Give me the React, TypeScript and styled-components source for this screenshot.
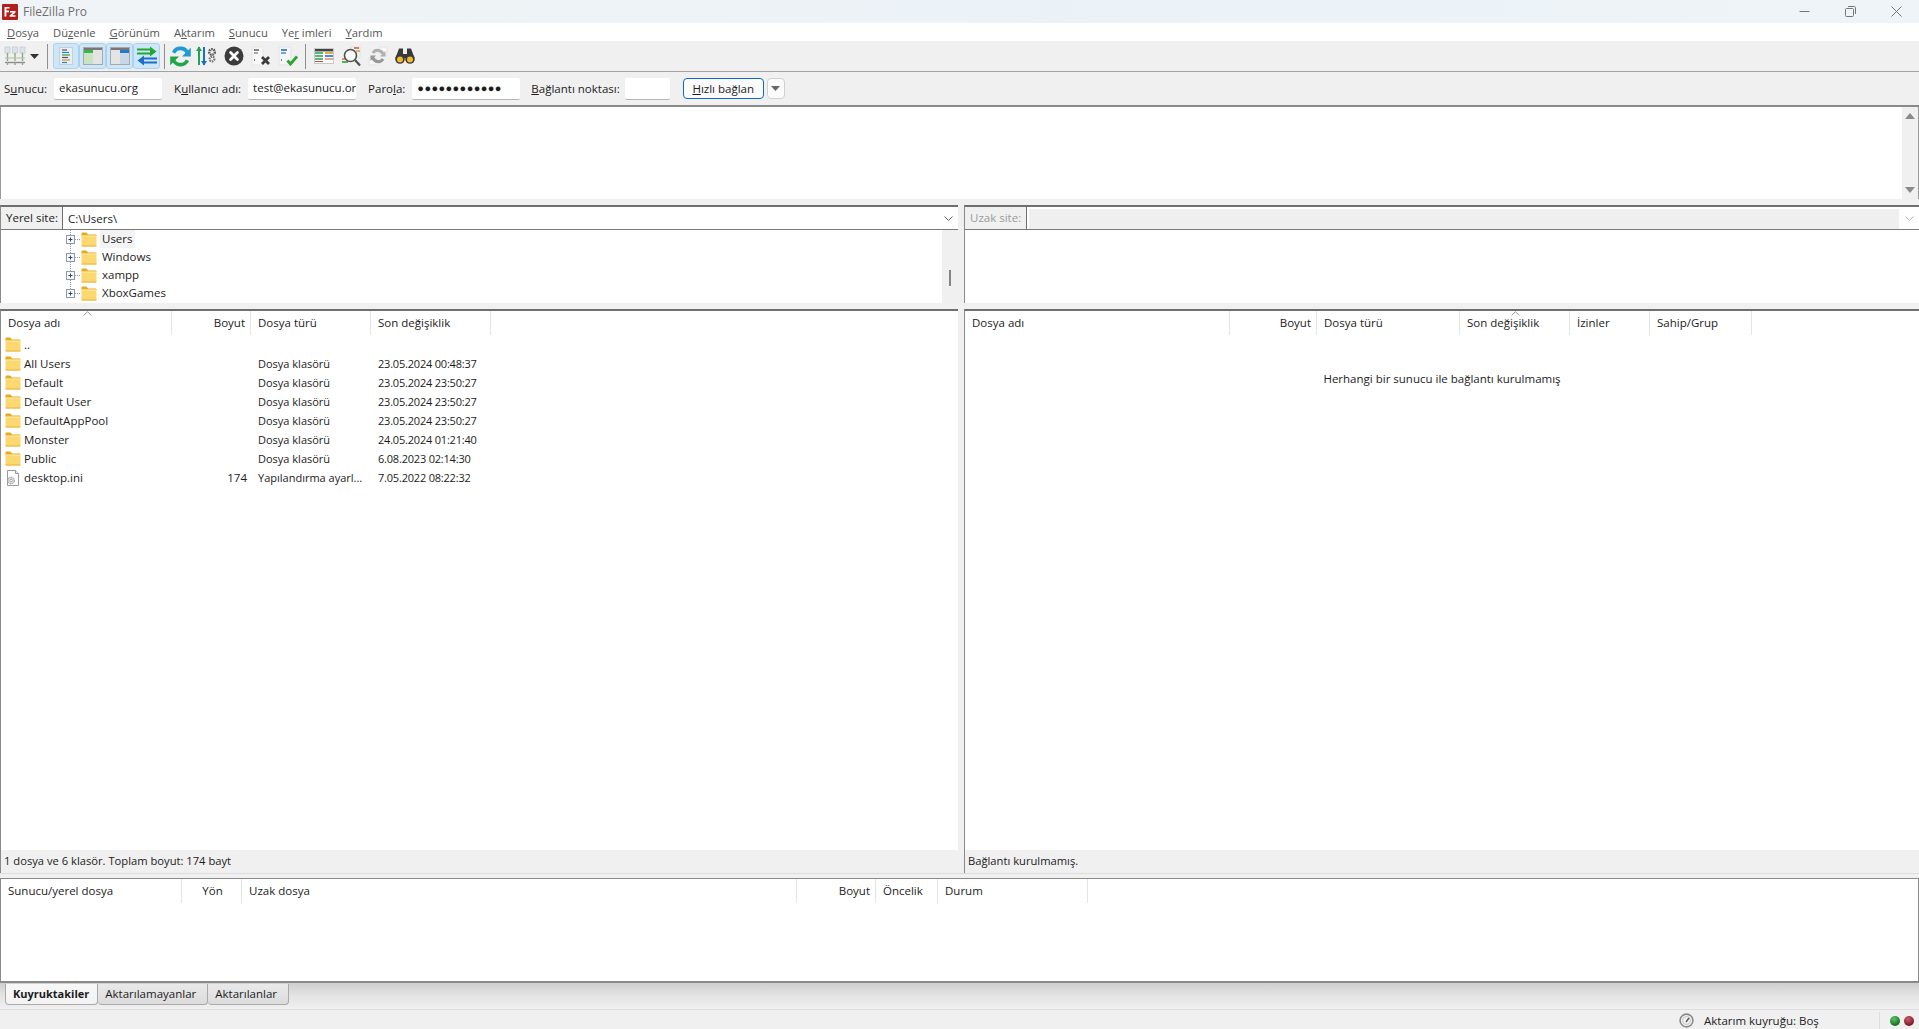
import React from "react";
import styled, { createGlobalStyle } from "styled-components";

const GlobalStyle = createGlobalStyle`
  html, body {
    margin: 0;
    padding: 0;
    height: 100%;
    overflow: hidden;
    background: #f0f0f0;
  }
  body {
    font-family: "Open Sans", "Noto Sans", sans-serif;
    font-size: 11.5px;
    color: #1c1c1c;
  }
  u { text-underline-offset: 1px; }
`;

const Page = styled.div`
  width: 1919px;
  height: 1029px;
  display: flex;
  flex-direction: column;
  overflow: hidden;
`;

const TitleBar = styled.div`
  height: 23px;
  flex: none;
  display: flex;
  align-items: center;
  background: linear-gradient(90deg, #f1f4f6 0%, #ebf2f7 55%, #eef4f8 100%);
  color: #6f6f6f;
  padding-left: 2px;
  font-size: 12px;
`;

const TitleText = styled.span`
  margin-left: 5px;
  flex: 1;
`;

const WindowButton = styled.div`
  width: 46px;
  height: 23px;
  display: flex;
  align-items: center;
  justify-content: center;
`;

const MenuBar = styled.div`
  height: 18px;
  flex: none;
  background: #fff;
  display: flex;
  align-items: center;
  gap: 14px;
  padding-left: 7px;
  color: #555;
  font-size: 11.2px;
`;

const Toolbar = styled.div`
  height: 30px;
  flex: none;
  display: flex;
  align-items: center;
  padding-left: 4px;
  background: #f0f0f0;
  border-bottom: 1px solid #a3a3a3;
`;

const ToolButton = styled.div<{ $active?: boolean; $w?: number }>`
  width: ${(p) => p.$w ?? 22}px;
  height: 26px;
  box-sizing: border-box;
  display: flex;
  align-items: center;
  justify-content: center;
  border-radius: 3px;
  ${(p) => (p.$active ? "background: #cfe6f8; border: 1px solid #a6d3f5;" : "")}
`;

const ToolSeparator = styled.div<{ $gap?: number }>`
  width: 1px;
  height: 25px;
  background: #8f8f8f;
  margin: 0 ${(p) => p.$gap ?? 5}px;
`;

const QuickBar = styled.div`
  height: 33px;
  flex: none;
  display: flex;
  align-items: center;
  padding-left: 4px;
  background: #f0f0f0;
  border-bottom: 2px solid #8a8a8a;
`;

const QuickLabel = styled.span<{ $gap?: number }>`
  margin-right: ${(p) => p.$gap ?? 8}px;
`;

const QuickInput = styled.div<{ $w: number; $mr: number }>`
  width: ${(p) => p.$w}px;
  height: 22px;
  margin-right: ${(p) => p.$mr}px;
  box-sizing: border-box;
  padding: 0 5px;
  background: #fff;
  border-bottom: 1px solid #b5b5b5;
  border-radius: 2px;
  line-height: 20px;
  overflow: hidden;
  white-space: nowrap;
`;

const Dots = styled.span`
  letter-spacing: 0.4px;
  font-size: 11px;
`;

const ConnectButton = styled.div`
  width: 81px;
  height: 21px;
  box-sizing: border-box;
  margin-right: 3px;
  border: 1px solid #0f6cbd;
  border-radius: 4px;
  background: #fbfbfb;
  text-align: center;
  line-height: 20px;
`;

const ArrowButton = styled.div`
  width: 18px;
  height: 21px;
  box-sizing: border-box;
  border: 1px solid #d0d0d0;
  border-radius: 4px;
  background: #fbfbfb;
  display: flex;
  align-items: center;
  justify-content: center;
`;

const LogArea = styled.div`
  height: 92px;
  flex: none;
  background: #fff;
  display: flex;
  justify-content: flex-end;
  border-left: 1px solid #9a9a9a;
  border-right: 1px solid #9a9a9a;
`;

const ScrollRail = styled.div<{ $w?: number }>`
  width: ${(p) => p.$w ?? 16}px;
  background: #f0f0f0;
  display: flex;
  flex-direction: column;
  justify-content: space-between;
  align-items: center;
  padding: 6px 0;
  box-sizing: border-box;
`;

const Panes = styled.div`
  flex: none;
  height: 668px;
  margin-top: 6px;
  display: grid;
  grid-template-columns: 958px 955px;
  column-gap: 6px;
  background: #f0f0f0;
  border-bottom: 1px solid #dcdcdc;
`;

const Pane = styled.div`
  display: flex;
  flex-direction: column;
  min-width: 0;
`;

const SiteBar = styled.div`
  height: 25px;
  flex: none;
  display: flex;
  box-sizing: border-box;
  border-top: 2px solid #6e6e6e;
  border-bottom: 1px solid #7a7a7a;
  border-left: 1px solid #8a8a8a;
  background: #fff;
`;

const SiteLabel = styled.div<{ $off?: boolean }>`
  width: 62px;
  flex: none;
  box-sizing: border-box;
  padding-left: 5px;
  line-height: 21px;
  background: #f0f0f0;
  border-right: 1px solid #6e6e6e;
  color: ${(p) => (p.$off ? "#9b9b9b" : "#1c1c1c")};
`;

const SiteField = styled.div<{ $off?: boolean }>`
  flex: 1;
  display: flex;
  align-items: center;
  padding: 0 5px;
  margin: ${(p) => (p.$off ? "2px 0 0 2px" : "0")};
  background: ${(p) => (p.$off ? "#efefef" : "#fff")};
`;

const Chevron = styled.div`
  width: 20px;
  flex: none;
  display: flex;
  align-items: center;
  justify-content: center;
`;

const TreeBox = styled.div`
  height: 73px;
  flex: none;
  display: flex;
  background: #fff;
  border-left: 1px solid #8a8a8a;
`;

const TreeList = styled.div`
  flex: 1;
  padding-left: 65px;
`;

const TreeRow = styled.div`
  height: 18px;
  display: flex;
  align-items: center;
`;

const TreeLabel = styled.span<{ $selected?: boolean }>`
  margin-left: 3px;
  padding: 0 2px;
  line-height: 18px;
  background: ${(p) => (p.$selected ? "#f3f3f3" : "transparent")};
`;

const TreeScroll = styled.div`
  width: 16px;
  flex: none;
  background: #f0f0f0;
  display: flex;
  justify-content: center;
  padding-top: 40px;
  box-sizing: border-box;
`;

const TreeThumb = styled.div`
  width: 2px;
  height: 16px;
  background: #858585;
`;

const ListBox = styled.div`
  flex: 1;
  margin-top: 6px;
  min-height: 0;
  display: flex;
  flex-direction: column;
  background: #fff;
  border-top: 2px solid #6e6e6e;
  border-left: 1px solid #8a8a8a;
`;

const HeaderRow = styled.div`
  height: 24px;
  flex: none;
  display: flex;
  position: relative;
`;

const HeaderCell = styled.div<{ $w: number; $right?: boolean; $center?: boolean }>`
  width: ${(p) => p.$w}px;
  flex: none;
  box-sizing: border-box;
  padding: 0 5px 0 7px;
  line-height: 24px;
  border-right: 1px solid #e5e5e5;
  text-align: ${(p) => (p.$right ? "right" : p.$center ? "center" : "left")};
`;

const SortCaret = styled.svg<{ $x: number }>`
  position: absolute;
  top: 0;
  left: ${(p) => p.$x}px;
`;

const FileRow = styled.div`
  height: 19px;
  display: flex;
  align-items: center;
`;

const NameCell = styled.div`
  width: 172px;
  flex: none;
  display: flex;
  align-items: center;
  padding-left: 4px;
  box-sizing: border-box;
  gap: 3px;
`;

const SizeCell = styled.div`
  width: 79px;
  flex: none;
  box-sizing: border-box;
  padding-right: 5px;
  text-align: right;
`;

const TypeCell = styled.div`
  width: 120px;
  flex: none;
  padding-left: 6px;
  box-sizing: border-box;
  white-space: nowrap;
  font-size: 11px;
`;

const DateCell = styled.div`
  padding-left: 6px;
  font-size: 11px;
  letter-spacing: -0.2px;
`;

const EmptyMessage = styled.div`
  margin-top: 36px;
  text-align: center;
`;

const ListBody = styled.div`
  flex: 1;
`;

const PaneStatus = styled.div`
  height: 23px;
  flex: none;
  line-height: 22px;
  padding-left: 3px;
  font-size: 11.2px;
  background: #f0f0f0;
`;

const QueueBox = styled.div`
  height: 105px;
  flex: none;
  margin-top: 4px;
  box-sizing: border-box;
  background: #fff;
  border: 1px solid #8a8a8a;
  border-bottom: 2px solid #8a8a8a;
`;

const TabStrip = styled.div`
  height: 26px;
  flex: none;
  display: flex;
  padding-left: 5px;
  align-items: flex-start;
  background: linear-gradient(180deg, #cfcfcf 0%, #e4e4e4 50%, #f0f0f0 100%);
  border-bottom: 1px solid #dedede;
`;

const Tab = styled.div<{ $active?: boolean }>`
  height: 21px;
  box-sizing: border-box;
  padding: 0 ${(p) => (p.$active ? 8 : 11)}px 0 7px;
  line-height: 20px;
  margin-top: 1px;
  background: ${(p) =>
    p.$active
      ? "linear-gradient(180deg, #f7f7f7, #f3f3f3)"
      : "linear-gradient(180deg, #e9e9e9, #dcdcdc)"};
  border: 1px solid #a9a9a9;
  border-top: none;
  border-left-width: ${(p) => (p.$active ? 1 : 0)}px;
  border-radius: 0 0 4px 4px;
  font-weight: ${(p) => (p.$active ? 700 : 400)};
  font-size: ${(p) => (p.$active ? 11 : 11.5)}px;
`;

const StatusBar = styled.div`
  flex: 1;
  display: flex;
  align-items: center;
  justify-content: flex-end;
  background: #f0f0f0;
  padding-top: 2px;
`;

const QueueStatus = styled.div`
  display: flex;
  align-items: center;
  gap: 10px;
  width: 200px;
  height: 100%;
  border-right: 1px solid #dedede;
`;

const Leds = styled.div`
  width: 39px;
  display: flex;
  align-items: center;
  gap: 4px;
  padding-left: 10px;
  box-sizing: border-box;
`;

const Led = styled.div<{ $color: string; $dark: string }>`
  width: 10px;
  height: 10px;
  border-radius: 50%;
  background: radial-gradient(circle at 40% 30%, ${(p) => p.$color}, ${(p) => p.$dark} 75%);
`;

const Folder = () => (
  <svg width="16" height="15" viewBox="0 0 16 15">
    <path d="M0.5 3V1.6C0.5 1 1 .5 1.6 .5H5.4L7 2.4H14.6C15.2 2.4 15.5 2.8 15.5 3.4V4H.5Z" fill="#e8a820" />
    <path d="M.5 3.6H15.5V13.4C15.5 14 15 14.5 14.4 14.5H1.6C1 14.5.5 14 .5 13.4Z" fill="#fcd970" />
    <path d="M.5 3.6H15.5V4.6H.5Z" fill="#ffeba6" />
    <path d="M.5 13.5H15.5V14.5H.5Z" fill="#e8b03a" />
  </svg>
);

const IniFile = () => (
  <svg width="16" height="16" viewBox="0 0 16 16">
    <path d="M2.5.5H10.5L13.5 3.5V15.5H2.5Z" fill="#fff" stroke="#9a9a9a" />
    <path d="M10.5.5V3.5H13.5" fill="#eee" stroke="#9a9a9a" />
    <circle cx="6" cy="10.5" r="3.4" fill="#d8d8d8" stroke="#8e8e8e" strokeDasharray="1.5 1" />
    <circle cx="6" cy="10.5" r="1.2" fill="#fff" stroke="#8e8e8e" strokeWidth=".6" />
  </svg>
);

const Expander = ({ last }: { last?: boolean }) => (
  <svg width="15" height="18" viewBox="0 0 15 18">
    <path d={last ? "M4.5 0V5" : "M4.5 0V18"} stroke="#9a9a9a" strokeDasharray="1 1" />
    <path d="M9 9.5H15" stroke="#9a9a9a" strokeDasharray="1 1" />
    <rect x=".5" y="5.5" width="8" height="8" fill="#f8f8f8" stroke="#8a9aa8" />
    <path d="M2.5 9.5H6.5M4.5 7.5V11.5" stroke="#2a4a6a" />
  </svg>
);

const SiteManagerIcon = () => (
  <svg width="22" height="20" viewBox="0 0 22 20">
    <rect x="1" y="1" width="5" height="6" fill="#dce4ea" stroke="#b4c2cc" strokeWidth=".6" />
    <rect x="8.5" y="1" width="5" height="6" fill="#dce4ea" stroke="#b4c2cc" strokeWidth=".6" />
    <rect x="16" y="1" width="5" height="6" fill="#dce4ea" stroke="#b4c2cc" strokeWidth=".6" />
    <path d="M3.5 7V15M11 7V15M18.5 7V15" stroke="#8ea884" strokeWidth="1.4" />
    <path d="M1 12H21" stroke="#b4c9a8" strokeWidth="1.2" />
    <path d="M1 16.5H21" stroke="#8a8a8a" strokeWidth="1.4" />
    <path d="M3.5 16V19M11 16V19M18.5 16V19" stroke="#9c9c9c" strokeWidth="1.4" />
  </svg>
);

const SmallArrow = ({ color = "#333" }: { color?: string }) => (
  <svg width="9" height="5" viewBox="0 0 9 5">
    <path d="M0 0H9L4.5 5Z" fill={color} />
  </svg>
);

const LogIcon = () => (
  <svg width="14" height="18" viewBox="0 0 14 18">
    <rect x=".5" y=".5" width="13" height="17" fill="#e8eff4" stroke="#c4d0d8" />
    <path d="M3 3H8" stroke="#555" strokeWidth="1.2" />
    <path d="M3 5.5H10" stroke="#2f7fd0" strokeWidth="1.2" />
    <path d="M3 8H11" stroke="#3aa03a" strokeWidth="1.2" />
    <path d="M3 10.5H9" stroke="#555" strokeWidth="1.2" />
    <path d="M3 13H11" stroke="#d09030" strokeWidth="1.2" />
    <path d="M3 15.5H8" stroke="#2f7fd0" strokeWidth="1.2" />
  </svg>
);

const PanelIcon = ({ side }: { side: "left" | "right" }) => (
  <svg width="20" height="20" viewBox="0 0 20 20">
    <rect x=".5" y="1.5" width="19" height="17" fill="#e4e4e4" stroke="#a8a8a8" />
    <rect x="1" y="2" width="18" height="2" fill="#777" />
    {side === "left" ? (
      <>
        <rect x="1" y="4" width="9" height="14" fill="#c9e3c4" />
        <rect x="1" y="4" width="9" height="3" fill="#3cb54a" />
      </>
    ) : (
      <>
        <rect x="10" y="4" width="9" height="14" fill="#c6d8e8" />
        <rect x="10" y="4" width="9" height="3" fill="#1e78cc" />
      </>
    )}
  </svg>
);

const SyncArrowsIcon = () => (
  <svg width="22" height="20" viewBox="0 0 22 20">
    <path d="M1 3.5H15M1 7.5H15" stroke="#1fa82f" strokeWidth="2" />
    <path d="M14 .5L20.5 5.5L14 10.5Z" fill="#1fa82f" />
    <path d="M7 12.5H21M7 16.5H21" stroke="#1b6fc6" strokeWidth="2" />
    <path d="M8 9.5L1.5 14.5L8 19.5Z" fill="#1b6fc6" />
  </svg>
);

const RefreshIcon = () => (
  <svg width="21" height="21" viewBox="0 0 20 20" fill="none">
    <path d="M17 7.5A7.3 7.3 0 0 0 3.4 6.4" stroke="#1f9ad6" strokeWidth="3.4" />
    <path d="M3 12.5A7.3 7.3 0 0 0 16.6 13.6" stroke="#1fa54a" strokeWidth="3.4" />
    <path d="M19.8 1.6V10H11.4Z" fill="#1f9ad6" />
    <path d="M.2 18.4V10H8.6Z" fill="#1fa54a" />
  </svg>
);

const QueueFilterIcon = () => (
  <svg width="21" height="20" viewBox="0 0 21 20">
    <path d="M3 1V19" stroke="#1fa54a" strokeWidth="2" />
    <path d="M0 5L3 .5L6 5Z" fill="#1fa54a" />
    <path d="M8 1V19" stroke="#1b6fc6" strokeWidth="2" />
    <path d="M5 15L8 19.5L11 15Z" fill="#1b6fc6" />
    <circle cx="16" cy="6" r="2.8" fill="none" stroke="#555" strokeWidth="2.4" strokeDasharray="1.6 .8" />
    <circle cx="16" cy="13" r="2.4" fill="none" stroke="#777" strokeWidth="2.2" strokeDasharray="1.4 .8" />
  </svg>
);

const CancelIcon = () => (
  <svg width="20" height="20" viewBox="0 0 20 20">
    <circle cx="10" cy="10" r="9.5" fill="#3c3c3c" />
    <path d="M6.6 6.6L13.4 13.4M13.4 6.6L6.6 13.4" stroke="#fff" strokeWidth="2.8" strokeLinecap="round" />
  </svg>
);

const DisconnectIcon = () => (
  <svg width="20" height="20" viewBox="0 0 20 20">
    <rect x="1" y="1" width="11" height="18" fill="#f8f8f8" stroke="#e6e6e6" />
    <path d="M3 4H8" stroke="#555" strokeWidth="1.4" />
    <path d="M3 7H7" stroke="#888" strokeWidth="1.4" />
    <path d="M3 14H4" stroke="#555" strokeWidth="1.4" />
    <path d="M11 11L18 18M18 11L11 18" stroke="#3a3a3a" strokeWidth="2.8" />
  </svg>
);

const ReconnectIcon = () => (
  <svg width="20" height="20" viewBox="0 0 20 20">
    <rect x="1" y="1" width="12" height="18" fill="#f4f6f8" stroke="#e0e4e8" />
    <path d="M3 4H9" stroke="#1b6fc6" strokeWidth="1.6" />
    <path d="M3 7H8" stroke="#1b6fc6" strokeWidth="1.2" />
    <path d="M3 14H4" stroke="#555" strokeWidth="1.4" />
    <path d="M9.5 14.5L12.5 18L19 10.5" fill="none" stroke="#2aa52a" strokeWidth="2.8" />
  </svg>
);

const CompareIcon = () => (
  <svg width="20" height="18" viewBox="0 0 20 18">
    <rect x=".5" y="1.5" width="19" height="15" fill="#fafafa" stroke="#c8c8c8" />
    <rect x="1" y="2" width="18" height="2.4" fill="#444" />
    <path d="M1 6H9M1 9H9M1 12H9" stroke="#1fa54a" strokeWidth="1.6" />
    <path d="M11 6H19" stroke="#d99a22" strokeWidth="1.6" />
    <path d="M11 9H19" stroke="#1b6fc6" strokeWidth="1.6" />
    <path d="M1 14.5H9M11 12H19" stroke="#d04a3a" strokeWidth="1.2" />
  </svg>
);

const SearchIcon = () => (
  <svg width="21" height="21" viewBox="0 0 21 21">
    <rect x="10" y="1" width="9" height="10" fill="#f6f6f6" stroke="#e0e0e0" />
    <path d="M13 2H18" stroke="#d04a3a" strokeWidth="1.4" />
    <path d="M15 5H19" stroke="#d9a022" strokeWidth="1.4" />
    <path d="M1 13H7" stroke="#d04a3a" strokeWidth="1.2" />
    <path d="M1 16H7" stroke="#2aa52a" strokeWidth="1.6" />
    <circle cx="9.5" cy="9.5" r="6" fill="#ffffffcc" stroke="#505050" strokeWidth="1.6" />
    <path d="M14 14L19 19.5" stroke="#505050" strokeWidth="2.2" />
  </svg>
);

const SyncBrowseIcon = () => (
  <svg width="20" height="20" viewBox="0 0 20 20" fill="none">
    <rect x="12" y="1" width="7" height="8" fill="#f8f8f8" stroke="#e4e4e4" />
    <rect x="1" y="12" width="7" height="7" fill="#f8f8f8" stroke="#e4e4e4" />
    <path d="M15 8A5.6 5.6 0 0 0 5 7" stroke="#b0b0b0" strokeWidth="3" />
    <path d="M5 12A5.6 5.6 0 0 0 15 13" stroke="#969696" strokeWidth="3" />
    <path d="M17.5 5V10.5H12Z" fill="#b0b0b0" />
    <path d="M2.5 15V9.5H8Z" fill="#969696" />
  </svg>
);

const BinocularsIcon = () => (
  <svg width="20" height="18" viewBox="0 0 20 18">
    <path d="M4 1.5H8V7H12V1.5H16L19.5 11H.5Z" fill="#3a3a3a" />
    <circle cx="5" cy="12" r="4.8" fill="#3a3a3a" />
    <circle cx="15" cy="12" r="4.8" fill="#3a3a3a" />
    <circle cx="5" cy="12.5" r="3" fill="#f2bb2a" />
    <circle cx="15" cy="12.5" r="3" fill="#f2bb2a" />
  </svg>
);

const FzLogo = () => (
  <svg width="16" height="16" viewBox="0 0 16 16">
    <rect width="16" height="16" rx="1" fill="#b3201c" />
    <path d="M2.5 3H7.5V4.6H4.4V6.6H7V8.2H4.4V12.5H2.5Z" fill="#fff" />
    <path d="M8 7H13.5V8.4L10.3 11.2H13.5V12.8H7.6V11.4L10.9 8.6H8Z" fill="#fff" />
  </svg>
);

const Gauge = () => (
  <svg width="15" height="15" viewBox="0 0 15 15" fill="none">
    <circle cx="7.5" cy="7.5" r="6.4" fill="#f2f2f2" stroke="#8a8a8a" strokeWidth="1.6" />
    <circle cx="7.5" cy="7.5" r="4" stroke="#c4c4c4" />
    <path d="M7 9L10 5" stroke="#555" strokeWidth="1.4" />
  </svg>
);

const DownChevron = ({ color }: { color: string }) => (
  <svg width="9" height="5" viewBox="0 0 9 5" fill="none">
    <path d="M.5 .5L4.5 4.5L8.5 .5" stroke={color} />
  </svg>
);

type Entry = { name: string; type: string; date: string; size?: string; file?: boolean };

const entries: Entry[] = [
  { name: "..", type: "", date: "" },
  { name: "All Users", type: "Dosya klasörü", date: "23.05.2024 00:48:37" },
  { name: "Default", type: "Dosya klasörü", date: "23.05.2024 23:50:27" },
  { name: "Default User", type: "Dosya klasörü", date: "23.05.2024 23:50:27" },
  { name: "DefaultAppPool", type: "Dosya klasörü", date: "23.05.2024 23:50:27" },
  { name: "Monster", type: "Dosya klasörü", date: "24.05.2024 01:21:40" },
  { name: "Public", type: "Dosya klasörü", date: "6.08.2023 02:14:30" },
  { name: "desktop.ini", type: "Yapılandırma ayarl...", date: "7.05.2022 08:22:32", size: "174", file: true },
];

const treeItems = ["Users", "Windows", "xampp", "XboxGames"];

const Caret = ({ x }: { x: number }) => (
  <SortCaret $x={x} width="9" height="5" viewBox="0 0 9 5" fill="none">
    <path d="M.5 4.5L4.5 .8L8.5 4.5" stroke="#9a9a9a" />
  </SortCaret>
);

export default function App() {
  return (
    <Page>
      <GlobalStyle />
      <TitleBar>
        <FzLogo />
        <TitleText>FileZilla Pro</TitleText>
        <WindowButton>
          <svg width="11" height="11" viewBox="0 0 11 11">
            <path d="M.5 5.5H10.5" stroke="#777" />
          </svg>
        </WindowButton>
        <WindowButton>
          <svg width="11" height="11" viewBox="0 0 11 11" fill="none">
            <rect x=".5" y="2.5" width="8" height="8" rx="1" stroke="#777" />
            <path d="M3 .5H9.5C10 .5 10.5 1 10.5 1.5V8" stroke="#777" />
          </svg>
        </WindowButton>
        <WindowButton>
          <svg width="11" height="11" viewBox="0 0 11 11">
            <path d="M.5 .5L10.5 10.5M10.5 .5L.5 10.5" stroke="#777" />
          </svg>
        </WindowButton>
      </TitleBar>

      <MenuBar>
        <span><u>D</u>osya</span>
        <span>Dü<u>z</u>enle</span>
        <span><u>G</u>örünüm</span>
        <span>A<u>k</u>tarım</span>
        <span><u>S</u>unucu</span>
        <span>Ye<u>r</u> imleri</span>
        <span><u>Y</u>ardım</span>
      </MenuBar>

      <Toolbar>
        <ToolButton $w={22}><SiteManagerIcon /></ToolButton>
        <ToolButton $w={16}><SmallArrow /></ToolButton>
        <ToolSeparator $gap={5} />
        <ToolButton $w={26} $active><LogIcon /></ToolButton>
        <ToolButton $w={27} $active><PanelIcon side="left" /></ToolButton>
        <ToolButton $w={27} $active><PanelIcon side="right" /></ToolButton>
        <ToolButton $w={27} $active><SyncArrowsIcon /></ToolButton>
        <ToolSeparator $gap={3.5} />
        <ToolButton $w={25}><RefreshIcon /></ToolButton>
        <ToolButton $w={27}><QueueFilterIcon /></ToolButton>
        <ToolButton $w={27}><CancelIcon /></ToolButton>
        <ToolButton $w={27}><DisconnectIcon /></ToolButton>
        <ToolButton $w={27}><ReconnectIcon /></ToolButton>
        <ToolSeparator $gap={4} />
        <ToolButton $w={28}><CompareIcon /></ToolButton>
        <ToolButton $w={27}><SearchIcon /></ToolButton>
        <ToolButton $w={26}><SyncBrowseIcon /></ToolButton>
        <ToolButton $w={27}><BinocularsIcon /></ToolButton>
      </Toolbar>

      <QuickBar>
        <QuickLabel $gap={7}>S<u>u</u>nucu:</QuickLabel>
        <QuickInput $w={108} $mr={12}>ekasunucu.org</QuickInput>
        <QuickLabel $gap={7}>K<u>u</u>llanıcı adı:</QuickLabel>
        <QuickInput $w={108} $mr={12}>test@ekasunucu.or</QuickInput>
        <QuickLabel $gap={7}>Paro<u>l</u>a:</QuickLabel>
        <QuickInput $w={108} $mr={11}><Dots>●●●●●●●●●●●●</Dots></QuickInput>
        <QuickLabel $gap={5}><u>B</u>ağlantı noktası:</QuickLabel>
        <QuickInput $w={45} $mr={13} />
        <ConnectButton><u>H</u>ızlı bağlan</ConnectButton>
        <ArrowButton><SmallArrow color="#666" /></ArrowButton>
      </QuickBar>

      <LogArea>
        <ScrollRail>
          <svg width="10" height="6" viewBox="0 0 10 6"><path d="M5 0L10 6H0Z" fill="#8a8a8a" /></svg>
          <svg width="10" height="6" viewBox="0 0 10 6"><path d="M0 0H10L5 6Z" fill="#8a8a8a" /></svg>
        </ScrollRail>
      </LogArea>

      <Panes>
        <Pane>
          <SiteBar>
            <SiteLabel>Yerel site:</SiteLabel>
            <SiteField>C:\Users\</SiteField>
            <Chevron><DownChevron color="#666" /></Chevron>
          </SiteBar>
          <TreeBox>
            <TreeList>
              {treeItems.map((item, i) => (
                <TreeRow key={item}>
                  <Expander last={i === treeItems.length - 1} />
                  <Folder />
                  <TreeLabel $selected={i === 0}>{item}</TreeLabel>
                </TreeRow>
              ))}
            </TreeList>
            <TreeScroll><TreeThumb /></TreeScroll>
          </TreeBox>
          <ListBox>
            <HeaderRow>
              <HeaderCell $w={171}>Dosya adı</HeaderCell>
              <HeaderCell $w={79} $right>Boyut</HeaderCell>
              <HeaderCell $w={120}>Dosya türü</HeaderCell>
              <HeaderCell $w={120}>Son değişiklik</HeaderCell>
              <Caret x={82} />
            </HeaderRow>
            <ListBody>
              {entries.map((e) => (
                <FileRow key={e.name}>
                  <NameCell>
                    {e.file ? <IniFile /> : <Folder />}
                    <span>{e.name}</span>
                  </NameCell>
                  <SizeCell>{e.size}</SizeCell>
                  <TypeCell>{e.type}</TypeCell>
                  <DateCell>{e.date}</DateCell>
                </FileRow>
              ))}
            </ListBody>
            <PaneStatus>1 dosya ve 6 klasör. Toplam boyut: 174 bayt</PaneStatus>
          </ListBox>
        </Pane>

        <Pane>
          <SiteBar>
            <SiteLabel $off>Uzak site:</SiteLabel>
            <SiteField $off />
            <Chevron><DownChevron color="#b5b5b5" /></Chevron>
          </SiteBar>
          <TreeBox />
          <ListBox>
            <HeaderRow>
              <HeaderCell $w={265}>Dosya adı</HeaderCell>
              <HeaderCell $w={87} $right>Boyut</HeaderCell>
              <HeaderCell $w={143}>Dosya türü</HeaderCell>
              <HeaderCell $w={110}>Son değişiklik</HeaderCell>
              <HeaderCell $w={80}>İzinler</HeaderCell>
              <HeaderCell $w={102}>Sahip/Grup</HeaderCell>
              <Caret x={546} />
            </HeaderRow>
            <ListBody>
              <EmptyMessage>Herhangi bir sunucu ile bağlantı kurulmamış</EmptyMessage>
            </ListBody>
            <PaneStatus>Bağlantı kurulmamış.</PaneStatus>
          </ListBox>
        </Pane>
      </Panes>

      <QueueBox>
        <HeaderRow>
          <HeaderCell $w={181}>Sunucu/yerel dosya</HeaderCell>
          <HeaderCell $w={60} $center>Yön</HeaderCell>
          <HeaderCell $w={555}>Uzak dosya</HeaderCell>
          <HeaderCell $w={79} $right>Boyut</HeaderCell>
          <HeaderCell $w={62}>Öncelik</HeaderCell>
          <HeaderCell $w={150}>Durum</HeaderCell>
        </HeaderRow>
      </QueueBox>

      <TabStrip>
        <Tab $active>Kuyruktakiler</Tab>
        <Tab>Aktarılamayanlar</Tab>
        <Tab>Aktarılanlar</Tab>
      </TabStrip>

      <StatusBar>
        <QueueStatus>
          <Gauge />
          <span>Aktarım kuyruğu: Boş</span>
        </QueueStatus>
        <Leds>
          <Led $color="#5fc46a" $dark="#136a1c" />
          <Led $color="#c8606a" $dark="#7a1420" />
        </Leds>
      </StatusBar>
    </Page>
  );
}
